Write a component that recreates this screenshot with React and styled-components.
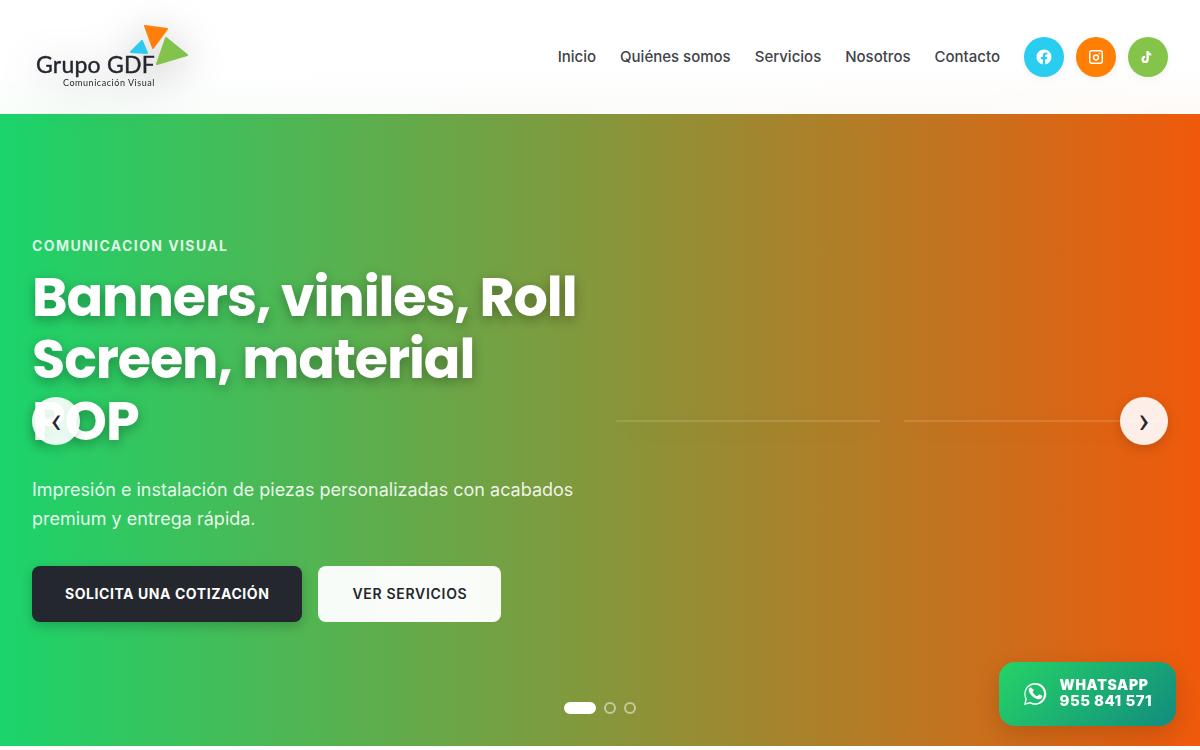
import React from "react";
import styled, { createGlobalStyle } from "styled-components";
import { RiFacebookCircleFill } from "react-icons/ri";

const heroGradient = "linear-gradient(90deg, #1bd46b 0%, #f0590b 100%)";

const Global = createGlobalStyle`
  *, *::before, *::after { box-sizing: border-box; }
  body {
    margin: 0;
    background: #fff;
    color: #24272e;
    font-family: Inter, "Liberation Sans", sans-serif;
  }
`;

const Header = styled.header`
  position: sticky;
  top: 0;
  z-index: 10;
  display: flex;
  align-items: center;
  justify-content: space-between;
  min-height: 114px;
  padding: 0 32px;
  background: linear-gradient(#fff 60%, rgba(255, 255, 255, 0.97)), ${heroGradient};
`;

const LogoLink = styled.a`
  display: flex;
  color: #24272e;
  text-decoration: none;

  svg {
    overflow: visible;
    filter: drop-shadow(0 8px 20px rgba(0, 0, 0, 0.3));
  }
`;

const LogoName = styled.text`
  font: 400 23px Lato, sans-serif;
  letter-spacing: 0.01em;
  fill: #24272e;
  stroke: #24272e;
  stroke-width: 0.4px;
`;

const LogoTag = styled.text`
  font: 400 9px Lato, sans-serif;
  letter-spacing: 0.06em;
  fill: #24272e;
`;

const HeaderRight = styled.div`
  display: flex;
  align-items: center;
  gap: 24px;
`;

const Nav = styled.nav`
  display: flex;
  gap: 24px;
`;

const NavLink = styled.a`
  font-size: 15px;
  line-height: 24px;
  font-weight: 500;
  color: #404247;
  text-decoration: none;
`;

const Socials = styled.div`
  display: flex;
  gap: 12px;
`;

const Social = styled.a`
  display: grid;
  place-items: center;
  width: 40px;
  height: 40px;
  border-radius: 50%;
  background: ${(p) => p.$color};
  color: #fff;
  box-shadow: 0 2px 8px rgba(0, 0, 0, 0.06);
`;

const Hero = styled.section`
  position: relative;
  display: grid;
  grid-template-columns: 1fr 1fr;
  align-items: center;
  gap: 32px;
  min-height: 650px;
  margin-top: -18px;
  padding: 0 32px;
  background: ${heroGradient};
`;

const Copy = styled.div`
  padding-top: 16px;
`;

const Eyebrow = styled.p`
  margin: 0 0 10px;
  font-size: 14px;
  line-height: 20px;
  font-weight: 700;
  letter-spacing: 0.1em;
  text-transform: uppercase;
  color: rgba(255, 255, 255, 0.85);
`;

const Title = styled.h1`
  margin: 0 0 23px;
  font-family: Poppins, Inter, sans-serif;
  font-size: 54px;
  line-height: 62px;
  font-weight: 700;
  letter-spacing: -0.02em;
  color: #fff;
  text-shadow: 0 4px 12px rgba(0, 0, 0, 0.3);
`;

const Lead = styled.p`
  margin: 0 0 33px;
  font-size: 18px;
  line-height: 29px;
  color: rgba(255, 255, 255, 0.9);
`;

const Actions = styled.div`
  display: flex;
  gap: 16px;
`;

const Action = styled.button`
  height: 56px;
  padding: 0 ${(p) => (p.$primary ? 33 : 34)}px 2px;
  border: 0;
  border-radius: 8px;
  font: ${(p) => (p.$primary ? 700 : 600)} 14px Inter, sans-serif;
  letter-spacing: ${(p) => (p.$primary ? "0.04em" : "0.05em")};
  text-transform: uppercase;
  white-space: nowrap;
  color: ${(p) => (p.$primary ? "#fff" : "#24272e")};
  background: ${(p) => (p.$primary ? "#24272e" : "rgba(255, 255, 255, 0.96)")};
  box-shadow: ${(p) => (p.$primary ? "0 4px 12px rgba(0, 0, 0, 0.2)" : "none")};
`;

const Cards = styled.div`
  display: grid;
  grid-template-columns: 1fr 1fr;
  gap: 24px;
`;

const Card = styled.div`
  border: 1px solid rgba(255, 255, 255, 0.12);
  box-shadow: 0 8px 32px rgba(0, 0, 0, 0.1);
`;

const Arrow = styled.button`
  position: absolute;
  top: 50%;
  ${(p) => p.$side}: 32px;
  transform: translateY(-50%);
  width: 48px;
  height: 48px;
  padding: 0;
  border: 0;
  border-radius: 50%;
  background: rgba(255, 255, 255, 0.9);
  color: #24272e;
  font: 400 36px Roboto, sans-serif;
  line-height: 40px;
  box-shadow: 0 4px 12px rgba(0, 0, 0, 0.15);
`;

const Dots = styled.div`
  position: absolute;
  left: 0;
  right: 0;
  bottom: 32px;
  display: flex;
  justify-content: center;
  gap: 8px;
`;

const Dot = styled.button`
  width: ${(p) => (p.$active ? 32 : 12)}px;
  height: 12px;
  padding: 0;
  border: 2px solid ${(p) => (p.$active ? "#fff" : "rgba(255, 255, 255, 0.5)")};
  border-radius: 6px;
  background: ${(p) => (p.$active ? "#fff" : "transparent")};
`;

const WhatsApp = styled.a`
  position: fixed;
  right: 24px;
  bottom: 24px;
  z-index: 20;
  display: flex;
  align-items: center;
  gap: 13px;
  height: 64px;
  padding: 0 24px;
  border-radius: 16px;
  color: #fff;
  text-decoration: none;
  background: linear-gradient(135deg, #25d366, #128c7e);
  box-shadow: 0 8px 24px rgba(0, 0, 0, 0.15);
`;

const WhatsAppText = styled.span`
  display: flex;
  flex-direction: column;
  line-height: 16px;
  padding-bottom: 2px;
`;

const WhatsAppLabel = styled.span`
  font-size: 14px;
  font-weight: 900;
  letter-spacing: 0.05em;
`;

const WhatsAppNumber = styled.span`
  font-size: 15px;
  font-weight: 800;
  letter-spacing: 0.03em;
`;

const links = ["Inicio", "Quiénes somos", "Servicios", "Nosotros", "Contacto"];

function Logo() {
  return (
    <svg width="160" height="82" viewBox="0 0 160 82" role="img" aria-label="Grupo GDF">
      <g strokeWidth="2" strokeLinejoin="round">
        <path d="M113 10 135 13 121 32Z" fill="#ff7f0a" stroke="#ff7f0a" />
        <path d="M134 22 155 39 125 48Z" fill="#82c34b" stroke="#82c34b" />
        <path d="M110 25 115 37 99 36Z" fill="#2bcbee" stroke="#2bcbee" />
      </g>
      <LogoName x="4" y="57">Grupo GDF</LogoName>
      <LogoTag x="31" y="70">Comunicación Visual</LogoTag>
    </svg>
  );
}

function InstagramIcon() {
  return (
    <svg width="16" height="16" viewBox="0 0 16 16" fill="none" stroke="#fff" strokeWidth="1.5">
      <rect x="1.75" y="1.75" width="12.5" height="12.5" rx="2" />
      <circle cx="8" cy="8.5" r="2.4" />
      <circle cx="11.4" cy="4.6" r="0.5" fill="#fff" strokeWidth="0.6" />
    </svg>
  );
}

function TikTokIcon() {
  return (
    <svg width="18" height="16" viewBox="0 0 18 16" fill="none" stroke="#fff" strokeWidth="2.3">
      <path d="M8.600 2v8.400a2.500 2.500 0 1 1-2.500-2.500M8.600 2c.2 2.200 1.500 3.400 3.600 3.600" />
    </svg>
  );
}

function WhatsAppIcon() {
  return (
    <svg width="24" height="24" viewBox="0 0 24 24">
      <path
        fill="#fff"
        fillRule="evenodd"
        d="M1 23 2.500 17A11 11 0 1 1 7 21.600ZM2.900 21.300 7.200 20.100A9.300 9.300 0 1 0 3.800 16.800Z"
      />
      <path
        fill="#fff"
        d="M8.800 6.400c-.4-.9-.8-.9-1.300-.9-.8.100-1.700 1.100-1.700 2.600 0 1.600 1.100 3.100 1.300 3.400.2.300 2.300 3.600 5.700 4.900 2.800 1.100 3.400.8 4 .7.700 0 2-.8 2.300-1.600.3-.8.300-1.500.200-1.600-.1-.2-.3-.3-.6-.4l-2.200-1c-.3-.1-.6-.2-.8.200l-1 1.200c-.2.200-.4.300-.7.100-.4-.2-1.400-.5-2.600-1.600-1-.9-1.600-1.900-1.800-2.300-.2-.4 0-.5.200-.7l.8-.9c.2-.3.200-.5.100-.7z"
      />
    </svg>
  );
}

export default function App() {
  return (
    <>
      <Global />
      <Header>
        <LogoLink href="#inicio">
          <Logo />
        </LogoLink>
        <HeaderRight>
          <Nav>
            {links.map((l) => (
              <NavLink key={l} href="#">{l}</NavLink>
            ))}
          </Nav>
          <Socials>
            <Social href="#" aria-label="Facebook" $color="#28cdf0">
              <RiFacebookCircleFill size={18} />
            </Social>
            <Social href="#" aria-label="Instagram" $color="#ff7f05">
              <InstagramIcon />
            </Social>
            <Social href="#" aria-label="TikTok" $color="#84c44b">
              <TikTokIcon />
            </Social>
          </Socials>
        </HeaderRight>
      </Header>
      <main>
        <Hero>
          <Copy>
            <Eyebrow>Comunicacion Visual</Eyebrow>
            <Title>Banners, viniles, Roll Screen, material POP</Title>
            <Lead>
              Impresión e instalación de piezas personalizadas con acabados premium y entrega rápida.
            </Lead>
            <Actions>
              <Action $primary>Solicita una cotización</Action>
              <Action>Ver servicios</Action>
            </Actions>
          </Copy>
          <Cards>
            <Card />
            <Card />
          </Cards>
          <Arrow $side="left" aria-label="Anterior">‹</Arrow>
          <Arrow $side="right" aria-label="Siguiente">›</Arrow>
          <Dots>
            <Dot $active aria-label="Diapositiva 1" />
            <Dot aria-label="Diapositiva 2" />
            <Dot aria-label="Diapositiva 3" />
          </Dots>
        </Hero>
      </main>
      <WhatsApp href="#">
        <WhatsAppIcon />
        <WhatsAppText>
          <WhatsAppLabel>WHATSAPP</WhatsAppLabel>
          <WhatsAppNumber>955 841 571</WhatsAppNumber>
        </WhatsAppText>
      </WhatsApp>
    </>
  );
}
